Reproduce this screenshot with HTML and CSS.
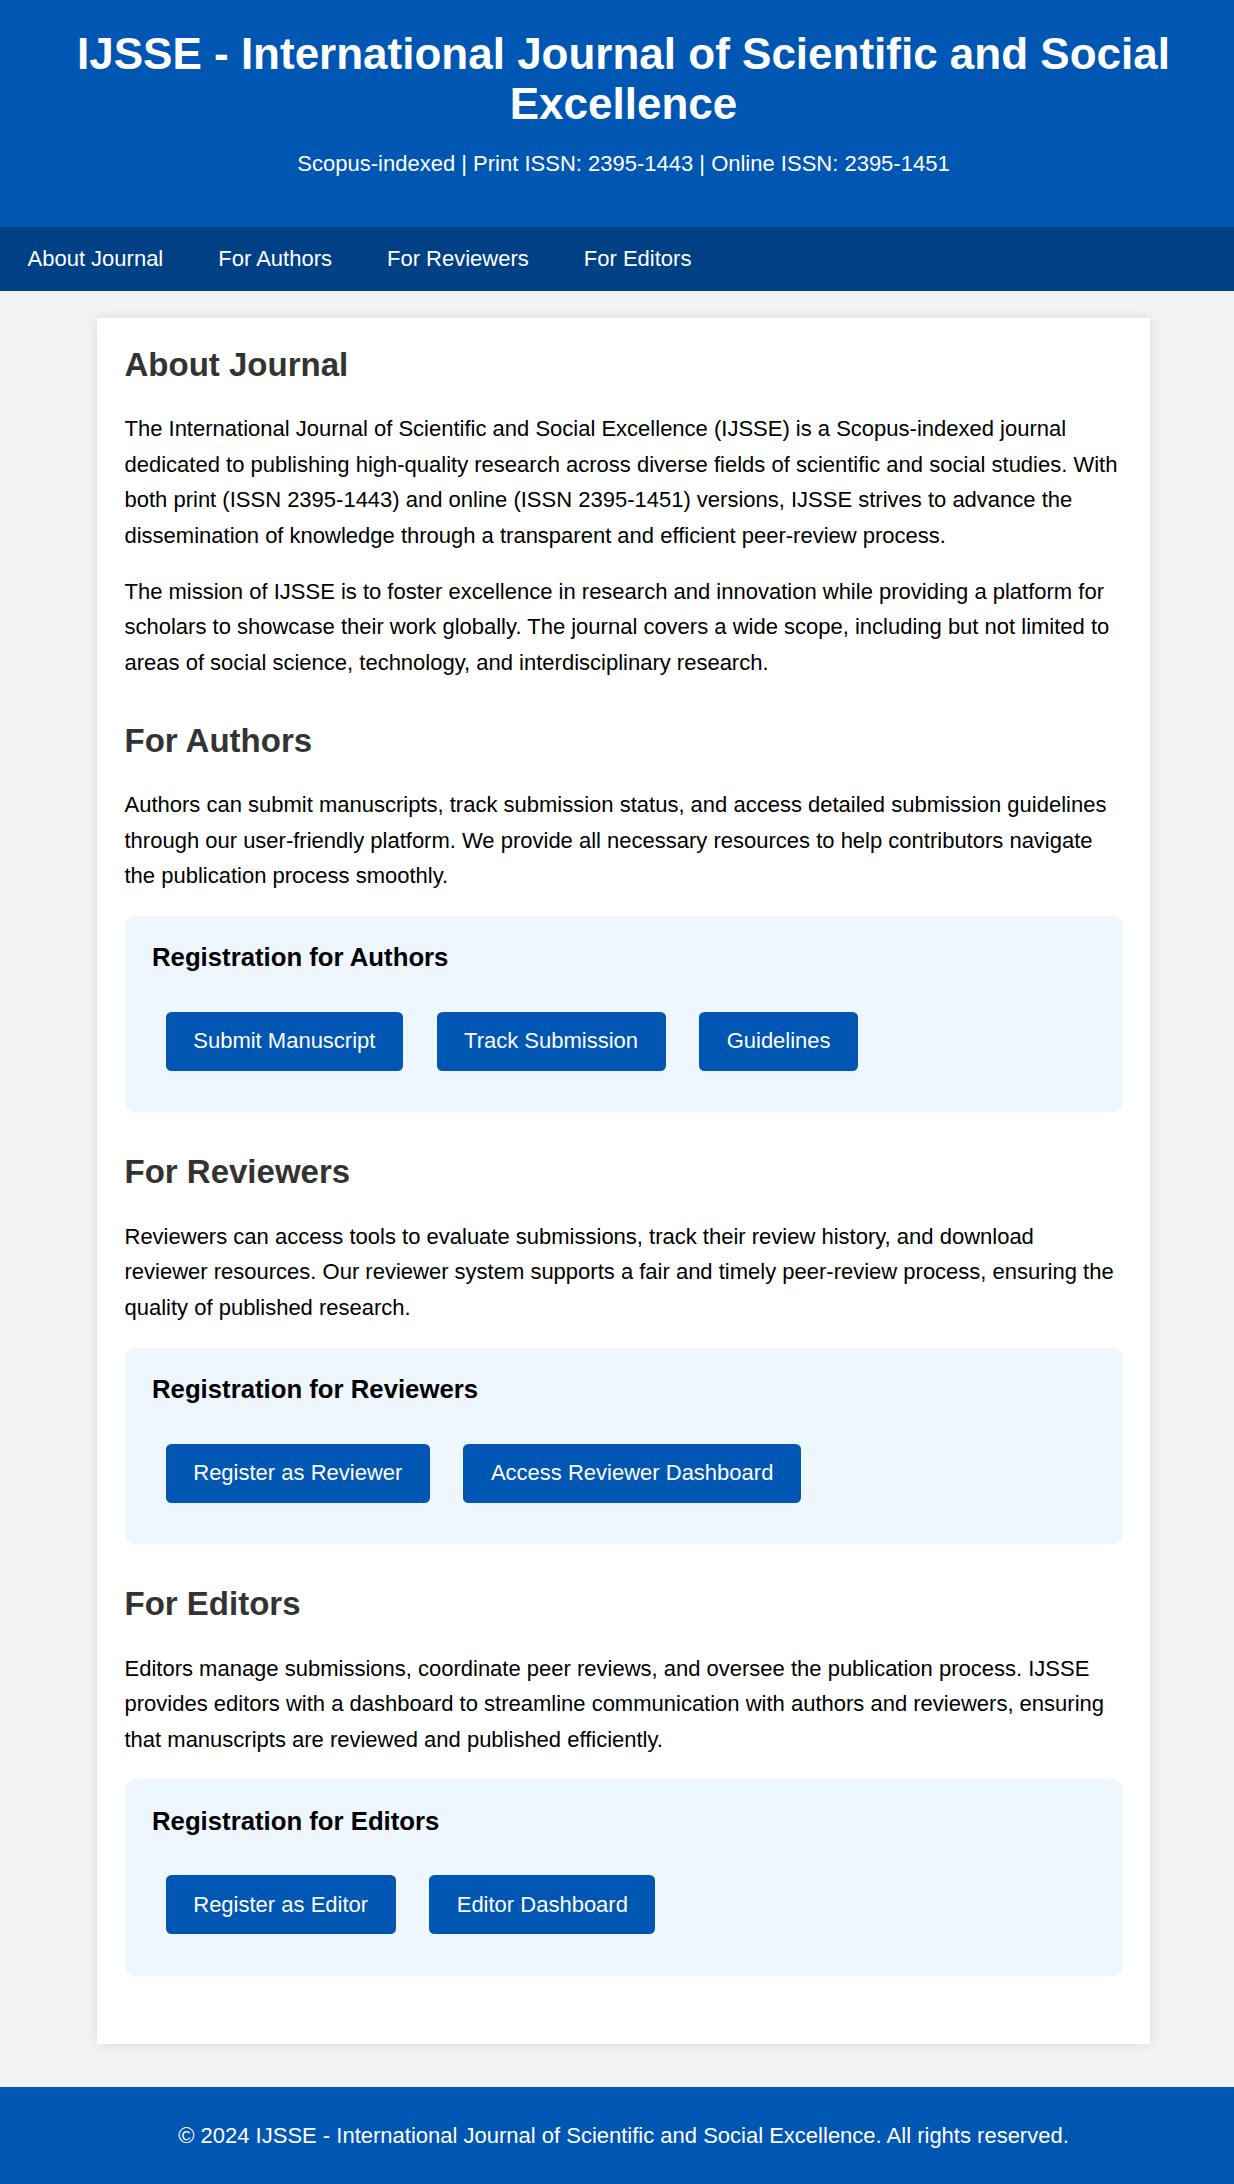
FILE: index.html
```html
<!DOCTYPE html>
<html lang="en">
<head>
<meta charset="utf-8">
<title>IJSSE - International Journal of Scientific and Social Excellence</title>
<link rel="stylesheet" href="styles.css">
</head>
<body>
<div class="page">
  <header class="site-header">
    <h1 class="site-title">IJSSE - International Journal of Scientific and Social Excellence</h1>
    <p class="site-sub">Scopus-indexed | Print ISSN: 2395-1443 | Online ISSN: 2395-1451</p>
  </header>
  <nav class="site-nav">
    <a href="#about">About Journal</a>
    <a href="#authors">For Authors</a>
    <a href="#reviewers">For Reviewers</a>
    <a href="#editors">For Editors</a>
  </nav>
  <main class="card">
    <section class="section" id="about">
      <h2>About Journal</h2>
      <p>The International Journal of Scientific and Social Excellence (IJSSE) is a Scopus-indexed journal dedicated to publishing high-quality research across diverse fields of scientific and social studies. With both print (ISSN 2395-1443) and online (ISSN 2395-1451) versions, IJSSE strives to advance the dissemination of knowledge through a transparent and efficient peer-review process.</p>
      <p>The mission of IJSSE is to foster excellence in research and innovation while providing a platform for scholars to showcase their work globally. The journal covers a wide scope, including but not limited to areas of social science, technology, and interdisciplinary research.</p>
    </section>
    <section class="section" id="authors">
      <h2>For Authors</h2>
      <p>Authors can submit manuscripts, track submission status, and access detailed submission guidelines through our user-friendly platform. We provide all necessary resources to help contributors navigate the publication process smoothly.</p>
      <div class="reg-box">
        <h3>Registration for Authors</h3>
        <div class="actions">
          <a class="btn" href="#">Submit Manuscript</a>
          <a class="btn" href="#">Track Submission</a>
          <a class="btn" href="#">Guidelines</a>
        </div>
      </div>
    </section>
    <section class="section" id="reviewers">
      <h2>For Reviewers</h2>
      <p>Reviewers can access tools to evaluate submissions, track their review history, and download reviewer resources. Our reviewer system supports a fair and timely peer-review process, ensuring the quality of published research.</p>
      <div class="reg-box">
        <h3>Registration for Reviewers</h3>
        <div class="actions">
          <a class="btn" href="#">Register as Reviewer</a>
          <a class="btn" href="#">Access Reviewer Dashboard</a>
        </div>
      </div>
    </section>
    <section class="section" id="editors">
      <h2>For Editors</h2>
      <p>Editors manage submissions, coordinate peer reviews, and oversee the publication process. IJSSE provides editors with a dashboard to streamline communication with authors and reviewers, ensuring that manuscripts are reviewed and published efficiently.</p>
      <div class="reg-box">
        <h3>Registration for Editors</h3>
        <div class="actions">
          <a class="btn" href="#">Register as Editor</a>
          <a class="btn" href="#">Editor Dashboard</a>
        </div>
      </div>
    </section>
  </main>
  <footer class="site-footer">
    <p>&copy; 2024 IJSSE - International Journal of Scientific and Social Excellence. All rights reserved.</p>
  </footer>
</div>
</body>
</html>
```

FILE: styles.css
```css
html {
  overflow-x: hidden;
}

body {
  margin: 0;
  background: #f3f3f3;
  color: #000;
  font-family: "Liberation Sans", Arial, sans-serif;
  font-size: 22px;
  line-height: 35.6px;
}

.page {
  width: 1247px;
}

.site-header {
  background: #0056b3;
  color: #fff;
  text-align: center;
  padding: 29px 27.5px 46px;
}

.site-title {
  margin: 0 0 16.5px;
  font-size: 44px;
  font-weight: bold;
  line-height: normal;
}

.site-sub {
  margin: 0;
  font-size: 22px;
  line-height: 35.2px;
}

.site-nav {
  display: flex;
  background: #004085;
}

.site-nav a {
  display: block;
  padding: 14.4px 27.5px;
  line-height: 35.2px;
  color: #fff;
  text-decoration: none;
  font-size: 22px;
}

.card {
  display: block;
  box-sizing: border-box;
  width: 1053px;
  margin: 27.5px auto 42.5px;
  padding: 27.5px;
  background: #fff;
  box-shadow: 0 0 12px rgba(0, 0, 0, 0.1);
}

.section {
  margin-bottom: 41.25px;
}

.section h2 {
  margin: 0 0 27.5px;
  font-size: 33px;
  line-height: normal;
  color: #333;
}

.section p {
  margin: 0 0 20px;
}

.reg-box {
  margin-top: 22px;
  padding: 27.5px;
  background: #eef6ff;
  border-radius: 11px;
}

.reg-box h3 {
  margin: 0 0 25.74px;
  font-size: 25.74px;
  line-height: normal;
  color: #000;
}

.actions {
  display: flex;
  flex-wrap: wrap;
  column-gap: 6.1px;
}

.btn {
  display: block;
  margin: 13.75px;
  padding: 16.5px 27.5px;
  background: #0056b3;
  color: #fff;
  text-decoration: none;
  font-size: 22px;
  line-height: normal;
  border-radius: 5.5px;
}

.site-footer {
  background: #0056b3;
  color: #fff;
  text-align: center;
  padding: 31.5px 20px;
}

.site-footer p {
  margin: 0;
  line-height: 35.2px;
}
```
